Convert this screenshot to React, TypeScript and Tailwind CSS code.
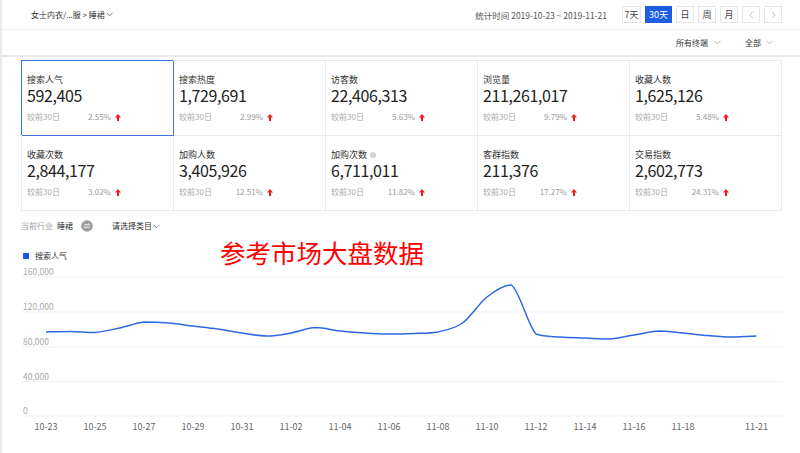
import React from "react";

const FONT = "font-['Noto_Sans_CJK_SC','Microsoft_YaHei',sans-serif]";

function Chevron({ color = "#999", className = "" }: { color?: string; className?: string }) {
  return (
    <svg width="7" height="5" viewBox="0 0 7 5" className={className}>
      <polyline points="0.5,0.8 3.5,3.8 6.5,0.8" fill="none" stroke={color} strokeWidth="0.9" />
    </svg>
  );
}

function UpArrow() {
  return (
    <svg width="6" height="7" viewBox="0 0 6 7" className="ml-[4px]">
      <polygon points="3,0 6,3.4 4,3.4 4,7 2,7 2,3.4 0,3.4" fill="#f01a1a" />
    </svg>
  );
}

function SwapIcon() {
  return (
    <svg width="12" height="12" viewBox="0 0 12 12" className="ml-[8px]">
      <circle cx="6" cy="6" r="5.8" fill="#9d9d9d" />
      <path d="M3.3 4.8 H8.6 L7.2 3.5" fill="none" stroke="#fff" strokeWidth="0.9" />
      <path d="M8.7 7.2 H3.4 L4.8 8.5" fill="none" stroke="#fff" strokeWidth="0.9" />
    </svg>
  );
}

const cards = [
  { label: "搜索人气", value: "592,405", pct: "2.55%" },
  { label: "搜索热度", value: "1,729,691", pct: "2.99%" },
  { label: "访客数", value: "22,406,313", pct: "5.63%" },
  { label: "浏览量", value: "211,261,017", pct: "9.79%" },
  { label: "收藏人数", value: "1,625,126", pct: "5.48%" },
  { label: "收藏次数", value: "2,844,177", pct: "3.02%" },
  { label: "加购人数", value: "3,405,926", pct: "12.51%" },
  { label: "加购次数", value: "6,711,011", pct: "11.82%", dot: true },
  { label: "客群指数", value: "211,376", pct: "17.27%" },
  { label: "交易指数", value: "2,602,773", pct: "24.31%" },
];

const ys = [
  332, 331.5, 332.5, 328, 322, 323, 326, 329, 333, 336, 333, 327.5, 331, 333, 334, 333.5, 332, 323, 297,
  285, 334, 337, 338, 339, 335, 331, 333, 335.5, 337, 336,
];

const xLabels: [number, string][] = [
  [0, "10-23"], [2, "10-25"], [4, "10-27"], [6, "10-29"], [8, "10-31"], [10, "11-02"], [12, "11-04"],
  [14, "11-06"], [16, "11-08"], [18, "11-10"], [20, "11-12"], [22, "11-14"], [24, "11-16"], [26, "11-18"],
  [29, "11-21"],
];

const gridLines: [number, string][] = [
  [15, "160,000"], [50, "120,000"], [85, "80,000"], [119.5, "40,000"], [154, "0"],
];

function clamp(v: number, a: number, b: number) {
  const lo = Math.min(a, b);
  const hi = Math.max(a, b);
  return Math.max(lo, Math.min(hi, v));
}

function buildPath() {
  const pts = ys.map((y, i) => [44 + 24.5 * i, y - 262]);
  let d = `M${pts[0][0]},${pts[0][1]}`;
  for (let i = 0; i < pts.length - 1; i++) {
    const p0 = pts[i - 1] || pts[i];
    const p1 = pts[i];
    const p2 = pts[i + 1];
    const p3 = pts[i + 2] || p2;
    const c1x = p1[0] + (p2[0] - p0[0]) / 6;
    const c1y = clamp(p1[1] + (p2[1] - p0[1]) / 6, p1[1], p2[1]);
    const c2x = p2[0] - (p3[0] - p1[0]) / 6;
    const c2y = clamp(p2[1] - (p3[1] - p1[1]) / 6, p1[1], p2[1]);
    d += ` C${c1x.toFixed(2)},${c1y.toFixed(2)} ${c2x.toFixed(2)},${c2y.toFixed(2)} ${p2[0]},${p2[1]}`;
  }
  return d;
}

export default function App() {
  const btns = [
    { t: "7天", w: "w-[19px]" },
    { t: "30天", w: "w-[27px]", active: true },
    { t: "日", w: "w-[18px]" },
    { t: "周", w: "w-[18px]" },
    { t: "月", w: "w-[18px]" },
  ];
  return (
    <div className={`${FONT} relative w-[800px] h-[453px] overflow-hidden bg-white border-l-2 border-[#e8eaee]`}>
      {/* header row 1 */}
      <div className="h-[30px] border-b border-[#eef0f3] flex items-center pl-[29px] pr-[18px]">
        <div className="flex items-center text-[8px] leading-[12px] text-[#333]">
          <span>女士内衣/...服 &gt; 睡裙</span>
          <Chevron color="#666" className="ml-[1px]" />
        </div>
        <div className="ml-auto flex items-center">
          <span className="text-[8.5px] leading-[12px] text-[#555] mr-[15px]">统计时间 2019-10-23 ~ 2019-11-21</span>
          <div className="flex gap-[4px]">
            {btns.map((b) => (
              <div
                key={b.t}
                className={`${b.w} h-[17px] flex items-center justify-center text-[9px] border ${
                  b.active ? "bg-[#1b5ee3] border-[#1b5ee3] text-white" : "bg-white border-[#e3e6ea] text-[#444]"
                }`}
              >
                {b.t}
              </div>
            ))}
            <div className="w-[18px] h-[17px] flex items-center justify-center border border-[#e3e6ea]">
              <svg width="5" height="8" viewBox="0 0 5 8">
                <polyline points="4,0.5 1,4 4,7.5" fill="none" stroke="#bbb" strokeWidth="0.9" />
              </svg>
            </div>
            <div className="w-[18px] h-[17px] flex items-center justify-center border border-[#e3e6ea]">
              <svg width="5" height="8" viewBox="0 0 5 8">
                <polyline points="1,0.5 4,4 1,7.5" fill="none" stroke="#bbb" strokeWidth="0.9" />
              </svg>
            </div>
          </div>
        </div>
      </div>

      {/* header row 2 */}
      <div className="h-[27px] border-b-2 border-[#e6e8eb] flex items-center justify-end pr-[27px] text-[8px] leading-[12px] text-[#333]">
        <div className="flex items-center">
          <span>所有终端</span>
          <Chevron color="#aaa" className="ml-[6px]" />
        </div>
        <div className="flex items-center ml-[24px]">
          <span>全部</span>
          <Chevron color="#aaa" className="ml-[5px]" />
        </div>
      </div>

      {/* cards */}
      <div className="ml-[19px] mt-[3px] w-[761px] grid grid-cols-5 border-l border-t border-[#e6eaf0]">
        {cards.map((c, i) => (
          <div
            key={c.label}
            className={`h-[75px] border-r border-b pl-[5px] pt-[13px] ${
              i === 0 ? "border-[#3b74e2] shadow-[-1px_-1px_0_0_#3b74e2]" : "border-[#e6eaf0]"
            }`}
          >
            <div className="flex items-center text-[9px] leading-[12px] text-[#333]">
              <span>{c.label}</span>
              {c.dot && <span className="ml-[3px] w-[6px] h-[6px] rounded-full bg-[#d3d3d3]" />}
            </div>
            <div className="text-[16px] leading-[18px] tracking-[-0.4px] text-[#222]">{c.value}</div>
            <div className="mt-[7px] flex items-center text-[8px] leading-[12px]">
              <div className="w-[84px] flex justify-between">
                <span className="text-[#aaa]">较前30日</span>
                <span className="text-[#999]">{c.pct}</span>
              </div>
              <UpArrow />
            </div>
          </div>
        ))}
      </div>

      {/* industry row */}
      <div className="mt-[9px] ml-[19px] flex items-center text-[8px] leading-[12px]">
        <span className="text-[#a0a0a0]">当前行业</span>
        <span className="ml-[4px] text-[#333]">睡裙</span>
        <SwapIcon />
        <span className="ml-[19px] text-[#333] flex items-center">
          请选择类目
          <Chevron color="#777" className="ml-[1px]" />
        </span>
      </div>

      {/* legend */}
      <div className="mt-[18px] ml-[21px] flex items-center text-[8px] leading-[12px] text-[#333]">
        <span className="w-[6px] h-[6px] bg-[#1d57df]" />
        <span className="ml-[6px]">搜索人气</span>
      </div>

      {/* chart */}
      <svg width="798" height="191" viewBox="0 0 798 191" className="block">
        {gridLines.map(([y, t]) => (
          <g key={t}>
            <line x1="20" x2="780" y1={y} y2={y} stroke="#eef1f6" strokeWidth="1" />
            <text x="21" y={y - 2} fontSize="8.5" fill="#aaa">
              {t}
            </text>
          </g>
        ))}
        {xLabels.map(([i, t]) => (
          <text key={t} x={44 + 24.5 * i} y="168" fontSize="9" fill="#666" textAnchor="middle">
            {t}
          </text>
        ))}
        <path d={buildPath()} fill="none" stroke="#2d68e3" strokeWidth="1.5" />
      </svg>

      {/* annotation */}
      <div className="absolute left-[218px] top-[237px] text-[25.5px] leading-[30px] text-[#ff0000] whitespace-nowrap">
        参考市场大盘数据
      </div>
    </div>
  );
}
